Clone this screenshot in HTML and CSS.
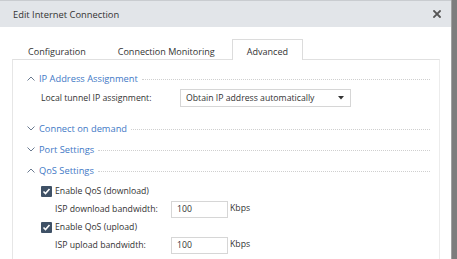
FILE: index.html
```html
<!DOCTYPE html>
<html>
<head>
<meta charset="utf-8">
<link rel="stylesheet" href="styles.css">
</head>
<body>
<div class="dialog">
  <div class="header">
    <span class="title">Edit Internet Connection</span>
    <svg class="close" width="8" height="8" viewBox="0 0 8 8"><path d="M1 1L7 7M7 1L1 7" stroke="#555" stroke-width="1.8" stroke-linecap="square"/></svg>
  </div>
  <div class="body">
    <div class="tabs">
      <div class="tab">Configuration</div>
      <div class="tab">Connection Monitoring</div>
      <div class="tab active">Advanced</div>
    </div>
    <div class="panel">
      <div class="section-head">
        <svg class="chev" width="8" height="5" viewBox="0 0 8 5"><polyline points="0.5,4.5 4,1 7.5,4.5" fill="none" stroke="#6a7a90" stroke-width="1"/></svg>
        <span class="section-title">IP Address Assignment</span>
        <span class="dots"></span>
      </div>
      <div class="field-row ip-row">
        <span class="label label-wide">Local tunnel IP assignment:</span>
        <div class="select">
          <span>Obtain IP address automatically</span>
          <svg width="6" height="4" viewBox="0 0 6 4"><polygon points="0,0 6,0 3,3.5" fill="#333"/></svg>
        </div>
      </div>
      <div class="section-head">
        <svg class="chev" width="8" height="5" viewBox="0 0 8 5"><polyline points="0.5,0.5 4,4 7.5,0.5" fill="none" stroke="#6a7a90" stroke-width="1"/></svg>
        <span class="section-title">Connect on demand</span>
        <span class="dots"></span>
      </div>
      <div class="section-head">
        <svg class="chev" width="8" height="5" viewBox="0 0 8 5"><polyline points="0.5,0.5 4,4 7.5,0.5" fill="none" stroke="#6a7a90" stroke-width="1"/></svg>
        <span class="section-title">Port Settings</span>
        <span class="dots"></span>
      </div>
      <div class="section-head">
        <svg class="chev" width="8" height="5" viewBox="0 0 8 5"><polyline points="0.5,4.5 4,1 7.5,4.5" fill="none" stroke="#6a7a90" stroke-width="1"/></svg>
        <span class="section-title">QoS Settings</span>
        <span class="dots"></span>
      </div>
      <div class="qos">
        <div class="check-row">
          <span class="checkbox"><svg width="11" height="11" viewBox="0 0 11 11"><polyline points="2.5,5.5 4.5,7.5 8.5,3" fill="none" stroke="#fff" stroke-width="1.6"/></svg></span>
          <span class="label">Enable QoS (download)</span>
        </div>
        <div class="field-row sub">
          <span class="label label-bw">ISP download bandwidth:</span>
          <div class="input">100</div>
          <span class="unit">Kbps</span>
        </div>
        <div class="check-row">
          <span class="checkbox"><svg width="11" height="11" viewBox="0 0 11 11"><polyline points="2.5,5.5 4.5,7.5 8.5,3" fill="none" stroke="#fff" stroke-width="1.6"/></svg></span>
          <span class="label">Enable QoS (upload)</span>
        </div>
        <div class="field-row sub">
          <span class="label label-bw">ISP upload bandwidth:</span>
          <div class="input">100</div>
          <span class="unit">Kbps</span>
        </div>
      </div>
    </div>
  </div>
</div>
</body>
</html>
```
FILE: styles.css
```css
* { box-sizing: border-box; }
html, body { margin: 0; padding: 0; }
body {
  background: #7d7d7d;
  font-family: "Open Sans", "Noto Sans", sans-serif;
  font-size: 8.7px;
  color: #333;
  height: 259px;
  overflow: hidden;
  white-space: nowrap;
}
.dialog {
  width: 452px;
  height: 259px;
  background: #fff;
  border-right: 1px solid #a0a0a0;
}
.header {
  height: 27px;
  background: #e2e5e9;
  border-top: 1px solid #c9ccd0;
  display: flex;
  align-items: center;
  justify-content: space-between;
  padding: 0 10px 0 13px;
}
.title { color: #333; font-size: 9.35px; }
.close { display: block; }
.body {
  padding: 12px 11px 0 12px;
}
.tabs {
  display: flex;
  gap: 2px;
  padding-left: 1px;
  height: 20px;
  align-items: flex-end;
}
.tab {
  height: 20px;
  line-height: 23px;
  padding: 0 14px;
  border: 1px solid transparent;
  border-bottom: none;
  color: #333;
  font-size: 9.05px;
}
.tab.active {
  border-color: #dcdcdc;
  background: #fff;
  margin-bottom: -1px;
  height: 21px;
  position: relative;
}
.panel {
  border-top: 1px solid #e0e0e0;
  border-left: 1px solid #e6e6e6;
  border-right: 1px solid #ececec;
  height: 200px;
  padding: 8px 9px 0 14px;
}
.section-head {
  display: flex;
  align-items: center;
  height: 21px;
}
.chev { display: block; margin-right: 4px; margin-top: -1px; flex-shrink: 0; }
.section-title { color: #4279c6; font-size: 9.3px; }
.dots {
  flex: 1;
  border-top: 1px dotted #cfcfcf;
  margin-left: 4px;
  margin-top: 2px;
}
.field-row {
  display: flex;
  align-items: center;
}
.ip-row {
  height: 18px;
  padding-left: 14px;
  margin-bottom: 11px;
}
.label { flex-shrink: 0; }
.label-wide { width: 139px; }
.select {
  width: 171px;
  height: 18px;
  border: 1px solid #d6d6d6;
  display: flex;
  align-items: center;
  justify-content: space-between;
  padding: 0 6px 0 5px;
  flex-shrink: 0;
}
.select svg { display: block; }
.qos { padding-left: 14px; margin-top: 1px; }
.check-row {
  display: flex;
  align-items: center;
  height: 18px;
}
.checkbox {
  width: 11px;
  height: 11px;
  background: #3f5166;
  border-radius: 1px;
  margin-right: 3px;
  flex-shrink: 0;
}
.checkbox svg { display: block; }
.sub { height: 18px; padding-left: 14px; }
.label-bw { width: 116px; }
.input {
  width: 57px;
  height: 17px;
  border: 1px solid #d6d6d6;
  line-height: 15px;
  padding-left: 5px;
  flex-shrink: 0;
}
.unit { margin-left: 2px; margin-top: -2px; }
```
